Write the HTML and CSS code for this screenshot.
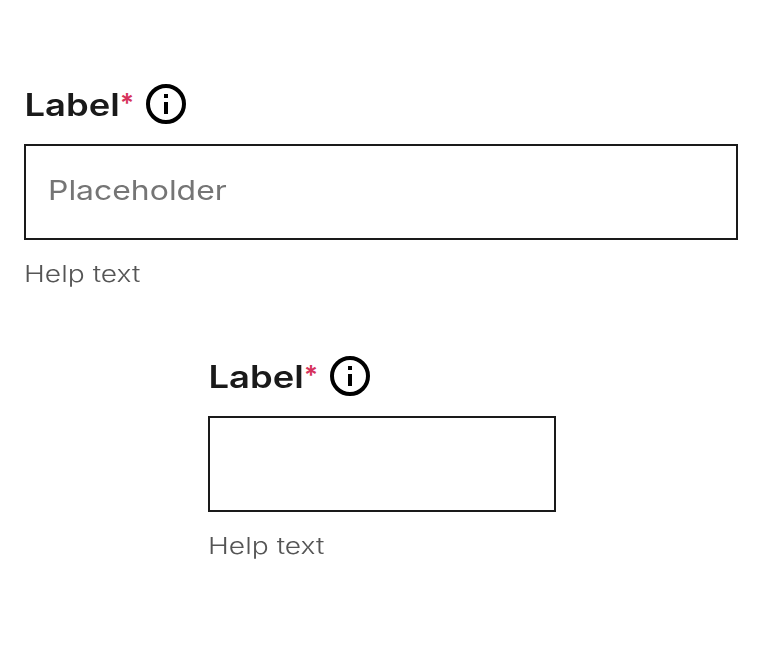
FILE: index.html
```html
<!DOCTYPE html>
<html lang="en">
<head>
<meta charset="utf-8">
<title>Text fields</title>
<link rel="stylesheet" href="styles.css">
</head>
<body>
<main class="stack">
  <div class="field">
    <div class="label-row">
      <label class="label" for="first"><span class="label-text">Label</span></label><span class="required">*</span>
      <svg class="info" viewBox="0 0 40 40" aria-hidden="true"><circle cx="20" cy="20" r="18"/><path d="M18 18h4v12h-4zM18 10h4v4h-4z"/></svg>
    </div>
    <div class="control" id="first"><span class="placeholder">Placeholder</span></div>
    <div class="help"><span class="help-text">Help text</span></div>
  </div>
  <div class="field field-narrow">
    <div class="label-row">
      <label class="label" for="second"><span class="label-text">Label</span></label><span class="required">*</span>
      <svg class="info" viewBox="0 0 40 40" aria-hidden="true"><circle cx="20" cy="20" r="18"/><path d="M18 18h4v12h-4zM18 10h4v4h-4z"/></svg>
    </div>
    <div class="control" id="second"></div>
    <div class="help"><span class="help-text">Help text</span></div>
  </div>
</main>
</body>
</html>
```
FILE: styles.css
```css
* { box-sizing: border-box; }
body { margin: 0; background: #fff; color: #1a1a1a; font-family: Inter, "Liberation Sans", sans-serif; }
.stack { display: flex; flex-direction: column; gap: 66px; padding: 84px 24px; }
.field { width: 714px; }
.field-narrow { width: 348px; margin-left: 184px; }
.label-row { display: flex; height: 40px; margin-bottom: 20px; }
.label { width: 96px; font-size: 31px; line-height: 42px; font-weight: 600; }
.label-text, .placeholder, .help-text { display: inline-block; transform-origin: 0 50%; white-space: nowrap; will-change: transform; }
.label-text { transform: translateX(0.5px) scaleX(1.175); }
.required { width: 26px; color: #d6335c; font-size: 26px; font-weight: 600; line-height: 38px; }
.info { width: 40px; height: 40px; }
.info circle { fill: none; stroke: #000; stroke-width: 4; }
.control { height: 96px; border: 2px solid #1a1a1a; padding: 0 0 2px 22px; display: flex; align-items: center; }
.placeholder { color: #757575; font-size: 27px; line-height: 40px; font-weight: 400; transform: scaleX(1.182); }
.help { height: 32px; margin-top: 18px; color: #555; font-size: 23px; line-height: 32px; font-weight: 300; }
.help-text { transform: scaleX(1.225); }
```
